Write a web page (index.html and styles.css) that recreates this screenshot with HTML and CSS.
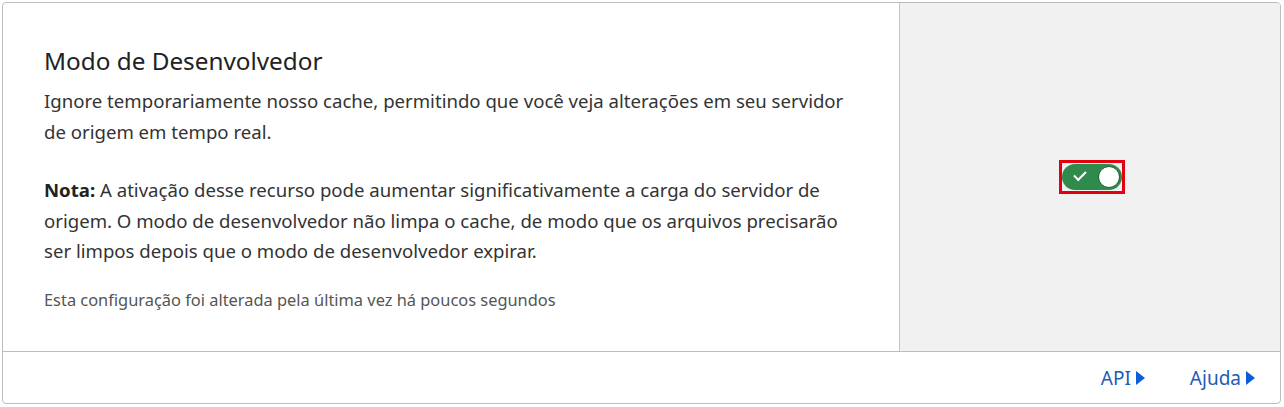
FILE: index.html
```html
<!DOCTYPE html>
<html>
<head>
  <title>Modo de Desenvolvedor</title>
  <link rel="stylesheet" href="styles.css">
</head>
<body>
  <div class="card">
    <div class="card-body">
      <div class="card-content">
        <h2>Modo de Desenvolvedor</h2>
        <p>Ignore temporariamente nosso cache, permitindo que você veja alterações em seu servidor de origem em tempo real.</p>
        <p><strong>Nota:</strong> A ativação desse recurso pode aumentar significativamente a carga do servidor de origem. O modo de desenvolvedor não limpa o cache, de modo que os arquivos precisarão ser limpos depois que o modo de desenvolvedor expirar.</p>
        <p class="updated">Esta configuração foi alterada pela última vez há poucos segundos</p>
      </div>
      <div class="card-control">
        <!-- destaque vermelho em volta do botão -->
        <div class="highlight">
          <div class="switch on">
            <span class="check"></span>
            <span class="knob"></span>
          </div>
        </div>
      </div>
    </div>
    <div class="card-footer">
      <a href="#">API<span class="caret"></span></a>
      <a href="#">Ajuda<span class="caret"></span></a>
    </div>
  </div>
</body>
</html>
```
FILE: styles.css
```css
body {
  font-family: 'Noto Sans', 'Open Sans', sans-serif;
  margin: 2px 3px 3px 2px;
  background-color: #fff;
  color: #333;
}

.card {
  border: 1px solid #bdbdbd;
  border-radius: 4px;
  overflow: hidden;
}

.card-body {
  display: flex;
  height: 348px;
}

.card-content {
  flex: 1;
  padding: 42px 38px 0 41px;
}

.card-content h2 {
  font-size: 24.3px;
  font-weight: 400;
  line-height: 32px;
  margin: 0 0 9px;
  color: #222;
}

.card-content p {
  font-size: 18.6px;
  line-height: 30.5px;
  margin: 0 0 28px;
  color: #333;
}

.card-content p strong {
  font-weight: 700;
  color: #222;
}

.card-content p.updated {
  font-size: 16.4px;
  line-height: 22px;
  margin-top: -6px;
  color: #555;
}

.card-control {
  width: 380px;
  background-color: #f1f1f1;
  border-left: 1px solid #c4c4c4;
  display: flex;
  align-items: center;
  justify-content: center;
}

.highlight {
  border: 3px solid #e3000f;
  padding: 1px 0;
  margin-left: 4px;
}

.switch {
  position: relative;
  width: 60px;
  height: 26px;
  border-radius: 13px;
  background-color: #2f8a4c;
}

.check {
  position: absolute;
  left: 12px;
  top: 7px;
  width: 10px;
  height: 5px;
  border-left: 2px solid #fff;
  border-bottom: 2px solid #fff;
  transform: rotate(-45deg);
}

.knob {
  position: absolute;
  right: 2px;
  top: 2px;
  width: 20px;
  height: 20px;
  border-radius: 50%;
  background-color: #fff;
  border: 1px solid #1d5c33;
}

.card-footer {
  border-top: 1px solid #bdbdbd;
  height: 51px;
  display: flex;
  justify-content: flex-end;
  align-items: center;
  gap: 45px;
  padding-right: 25px;
}

.card-footer a {
  color: #1d5cb8;
  text-decoration: none;
  font-size: 19px;
  display: flex;
  align-items: center;
}

.caret {
  width: 0;
  height: 0;
  border-top: 7px solid transparent;
  border-bottom: 7px solid transparent;
  border-left: 9px solid #0a5ed7;
  margin-left: 5px;
}
```
